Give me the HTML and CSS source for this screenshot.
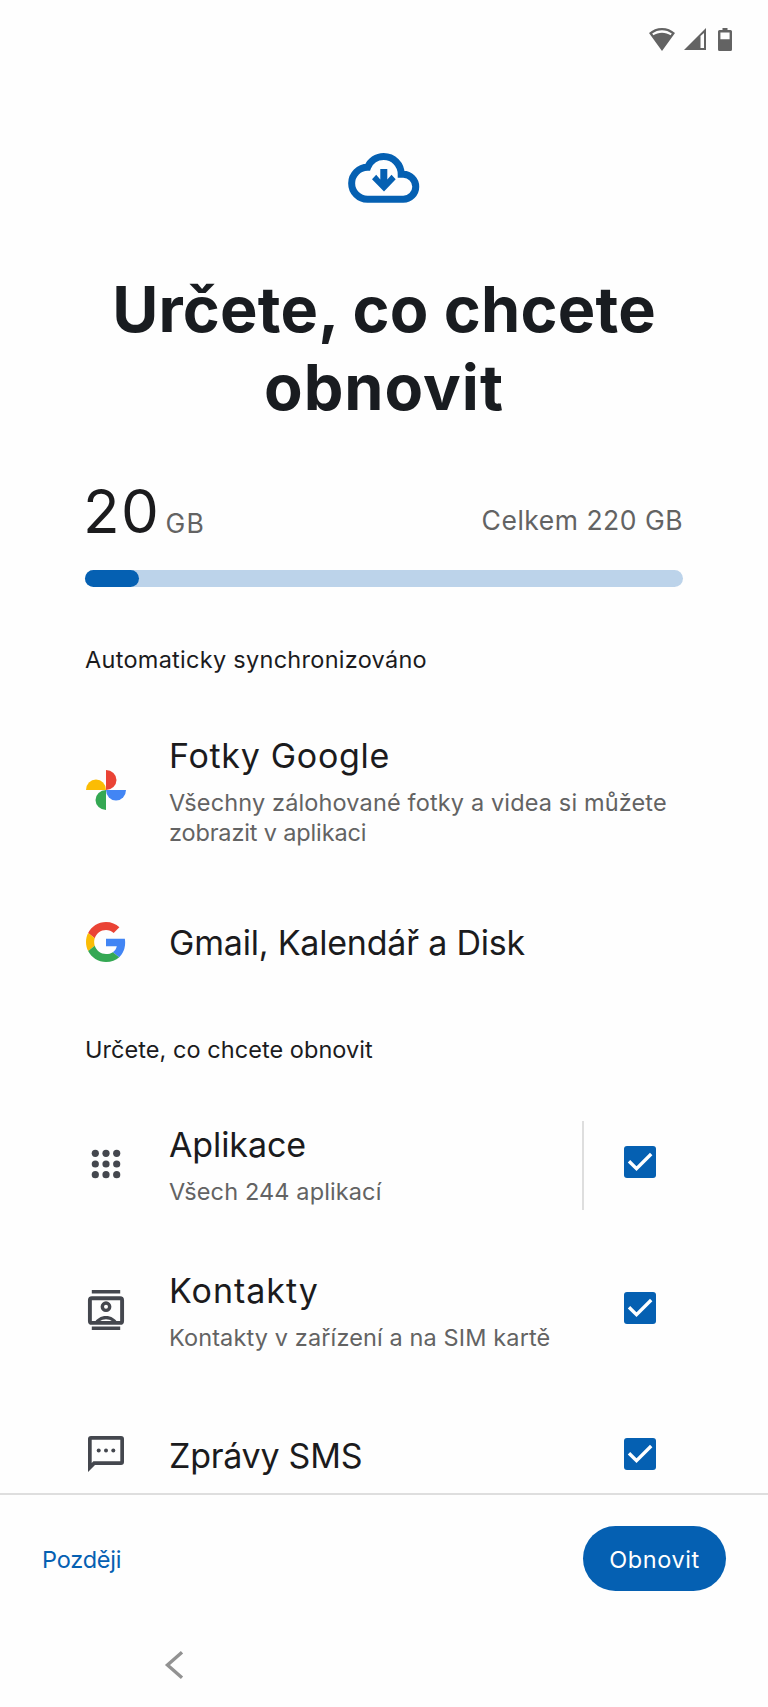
FILE: index.html
```html
<!DOCTYPE html>

<html lang="cs">

<head>

    <title>Určete, co chcete obnovit</title>

    <meta charset="UTF-8">
    <meta name="viewport" content="width=device-width, initial-scale=1.0">

    <link rel="stylesheet" href="styles.css">

</head>

<body>

    <!-- SCROLLING CONTENT -->
    <div class="main-content">

        <!-- STATUS BAR -->
        <div class="status-bar">
            <svg width="26" height="23" viewBox="0 0 26 23">
                <path fill="#636363" fill-rule="evenodd" d="M13 0C8 0 3.500 1.900 0 5L13 23L26 5C22.500 1.900 18 0 13 0ZM13 2.200C16.700 2.200 20 3.400 22.800 5.500L21.600 7.300C19.100 5.700 16.200 4.800 13 4.800C9.800 4.800 6.900 5.700 4.400 7.300L3.200 5.500C6 3.400 9.300 2.200 13 2.200Z"/>
            </svg>
            <svg width="22" height="22" viewBox="0 0 22 22">
                <path fill="#636363" fill-rule="evenodd" d="M0 22L22 0V22ZM16.500 8V20H20V5Z"/>
            </svg>
            <svg width="14" height="23" viewBox="0 0 14 23">
                <path fill="#636363" fill-rule="evenodd" d="M4.500 0H9.500V2H12.500Q14 2 14 3.500V21.500Q14 23 12.500 23H1.500Q0 23 0 21.500V3.500Q0 2 1.500 2H4.500ZM2.400 4.600V11.300H11.600V4.600Z"/>
            </svg>
        </div>

        <!-- HEADER -->
        <div class="header">
            <svg class="cloud" width="72" height="50" viewBox="0 0 72 50">
                <path fill="none" stroke="#0560b2" stroke-width="7" d="M19.500 46.200H55.300A12.450 12.450 0 0 0 55.300 21.300H53.200C53.200 11.500 45.500 3.500 35.700 3.500C28.500 3.500 22.300 7.900 19.700 14.300A15.900 15.900 0 0 0 19.500 46.200Z"/>
                <path fill="#0560b2" d="M32.300 16H39.300V26.500L43.500 21.800L47.700 26.300L36 38.600L24 26.300L28.200 21.800L32.300 26.500Z"/>
            </svg>
            <h1><span class="line-1">Určete, co chcete</span><br><span class="line-2">obnovit</span></h1>
        </div>

        <!-- STORAGE -->
        <div class="storage">
            <div class="used"><span class="number">20</span><span class="unit">GB</span></div>
            <div class="total">Celkem 220 GB</div>
        </div>
        <div class="bar">
            <div class="bar-fill" style="width: 9%"></div>
        </div>

        <!-- SYNCED -->
        <h2 class="label label-sync">Automaticky synchronizováno</h2>
        <div class="row row-photos">
            <div class="icon">
                <svg width="40" height="40" viewBox="0 0 40 40">
                    <path fill="#ea4335" d="M20 0A10.500 10 0 0 1 20 20Z"/>
                    <path fill="#fbbc04" d="M0 20A10 10.500 0 0 1 20 20Z"/>
                    <path fill="#34a853" d="M20 40A10.500 10 0 0 1 20 20Z"/>
                    <path fill="#4285f4" d="M40 20A10 10.500 0 0 1 20 20Z"/>
                </svg>
            </div>
            <div class="text">
                <h3>Fotky Google</h3>
                <p>Všechny zálohované fotky a videa si můžete<br><span class="second">zobrazit v aplikaci</span></p>
            </div>
        </div>
        <div class="row row-google">
            <div class="icon">
                <svg width="40" height="40" viewBox="0 0 48 48">
                    <path fill="#ea4335" d="M24 9.500c3.540 0 6.710 1.220 9.210 3.600l6.850-6.850C35.900 2.380 30.470 0 24 0 14.620 0 6.510 5.380 2.560 13.220l7.980 6.190C12.430 13.720 17.740 9.500 24 9.500z"/>
                    <path fill="#4285f4" d="M46.980 24.550c0-1.570-.15-3.090-.38-4.550H24v9.020h12.940c-.58 2.960-2.260 5.480-4.780 7.180l7.730 6c4.510-4.180 7.090-10.360 7.090-17.650z"/>
                    <path fill="#fbbc05" d="M10.530 28.590c-.48-1.450-.76-2.990-.76-4.590s.27-3.140.76-4.590l-7.980-6.190C.92 16.460 0 20.120 0 24c0 3.880.92 7.540 2.560 10.780l7.970-6.190z"/>
                    <path fill="#34a853" d="M24 48c6.480 0 11.930-2.130 15.890-5.810l-7.730-6c-2.150 1.450-4.920 2.300-8.160 2.300-6.260 0-11.570-4.220-13.470-9.910l-7.980 6.190C6.510 42.620 14.620 48 24 48z"/>
                </svg>
            </div>
            <div class="text">
                <h3>Gmail, Kalendář a Disk</h3>
            </div>
        </div>

        <!-- CHOOSE WHAT TO RESTORE -->
        <h2 class="label label-restore">Určete, co chcete obnovit</h2>
        <div class="row row-apps">
            <div class="icon">
                <svg width="40" height="40" viewBox="0 0 40 40" fill="#44474e">
                    <circle cx="9.300" cy="9.300" r="3.600"/><circle cx="20" cy="9.300" r="3.600"/><circle cx="30.700" cy="9.300" r="3.600"/>
                    <circle cx="9.300" cy="20" r="3.600"/><circle cx="20" cy="20" r="3.600"/><circle cx="30.700" cy="20" r="3.600"/>
                    <circle cx="9.300" cy="30.700" r="3.600"/><circle cx="20" cy="30.700" r="3.600"/><circle cx="30.700" cy="30.700" r="3.600"/>
                </svg>
            </div>
            <div class="text">
                <h3>Aplikace</h3>
                <p>Všech 244 aplikací</p>
            </div>
            <div class="divider"></div>
            <div class="checkbox">
                <svg width="32" height="32" viewBox="0 0 32 32"><path fill="none" stroke="#fff" stroke-width="3.400" d="M5 15.300L12.500 22.700L27.200 8"/></svg>
            </div>
        </div>
        <div class="row row-contacts">
            <div class="icon">
                <svg width="40" height="40" viewBox="0 0 40 40">
                    <path fill="#44474e" d="M5.800 0H34.200V3.500H5.800ZM5.800 36.500H34.200V40H5.800Z"/>
                    <rect x="3.900" y="8.300" width="32.200" height="24.600" rx="2" fill="none" stroke="#44474e" stroke-width="3.900"/>
                    <circle cx="20" cy="16.700" r="3.700" fill="none" stroke="#44474e" stroke-width="3.400"/>
                    <path fill="#44474e" fill-rule="evenodd" d="M8.300 33C10.500 28.700 15 26 20 26C25 26 29.500 28.700 31.700 33ZM13.500 31.500H26.500C24.500 30 22.500 29.300 20 29.300C17.500 29.300 15.500 30 13.500 31.500Z"/>
                </svg>
            </div>
            <div class="text">
                <h3>Kontakty</h3>
                <p>Kontakty v zařízení a na SIM kartě</p>
            </div>
            <div class="checkbox">
                <svg width="32" height="32" viewBox="0 0 32 32"><path fill="none" stroke="#fff" stroke-width="3.400" d="M5 15.300L12.500 22.700L27.200 8"/></svg>
            </div>
        </div>
        <div class="row row-sms">
            <div class="icon">
                <svg width="40" height="40" viewBox="0 0 40 40">
                    <path fill="#44474e" fill-rule="evenodd" d="M5 2H35Q38 2 38 5V28Q38 31 35 31H9L2 38V5Q2 2 5 2ZM5.700 5.700V29L7.400 27.300H34.300V5.700Z"/>
                    <circle cx="12.700" cy="16.600" r="2" fill="#44474e"/><circle cx="20" cy="16.600" r="2" fill="#44474e"/><circle cx="27.300" cy="16.600" r="2" fill="#44474e"/>
                </svg>
            </div>
            <div class="text">
                <h3>Zprávy SMS</h3>
            </div>
            <div class="checkbox">
                <svg width="32" height="32" viewBox="0 0 32 32"><path fill="none" stroke="#fff" stroke-width="3.400" d="M5 15.300L12.500 22.700L27.200 8"/></svg>
            </div>
        </div>
    </div>

    <!-- BOTTOM BUTTONS -->
    <div class="footer">
        <button class="later">Později</button>
        <button class="restore">Obnovit</button>
    </div>

    <!-- NAVIGATION BAR -->
    <div class="nav-bar">
        <svg width="20" height="30" viewBox="0 0 20 30">
            <path fill="none" stroke="#929292" stroke-width="3.400" d="M18 2.300L3.500 15L18 27.700"/>
        </svg>
    </div>

</body>

</html>
```
FILE: styles.css
```css
* {
    padding: 0;
    margin: 0;
    box-sizing: border-box;
}
body {
    background-color: #fefefe;
    font-family: Inter, "Open Sans", sans-serif;
    color: #1b1b1d;
    width: 100%;
}
svg {
    display: block;
}
.main-content {
    height: 1493px;
    padding: 0 85px;
    overflow: hidden;
}

/* Status bar */
.status-bar {
    display: flex;
    justify-content: flex-end;
    height: 153px;
    padding-top: 28px;
    margin-right: -49px;
}
.status-bar svg + svg {
    margin-left: 9px;
}
.status-bar svg:last-child {
    margin-left: 12px;
}

/* Header */
.cloud {
    margin: 0 auto;
}
h1 {
    margin-top: 67px;
    font-size: 63px;
    line-height: 78px;
    font-weight: 700;
    text-align: center;
    white-space: nowrap;
    color: #191c20;
}
.line-1 {
    letter-spacing: 0.2px;
}
.line-2 {
    letter-spacing: 1px;
}

/* Storage */
.storage {
    display: flex;
    justify-content: space-between;
    align-items: flex-end;
    height: 60px;
    margin-top: 55px;
}
.used {
    display: flex;
    align-items: baseline;
    height: 60px;
    line-height: 60px;
    margin-left: -2px;
}
.number {
    font-size: 60px;
    letter-spacing: 1.5px;
}
.unit {
    font-size: 26.5px;
    letter-spacing: 1.2px;
    margin-left: 5px;
    color: #636363;
}
.total {
    font-size: 26.5px;
    line-height: 30px;
    letter-spacing: 0.5px;
    margin-bottom: 6px;
    color: #636363;
}
.bar {
    height: 17px;
    margin-top: 29px;
    border-radius: 9px;
    background-color: #bcd3ea;
}
.bar-fill {
    height: 17px;
    border-radius: 9px;
    background-color: #0560b2;
}

/* List */
.label {
    font-size: 23.5px;
    line-height: 30px;
    font-weight: 400;
}
.label-sync {
    margin: 58px 0 39px;
    letter-spacing: 0.28px;
}
.label-restore {
    margin: 19px 0 27px;
    letter-spacing: 0.05px;
}
.row {
    display: flex;
    align-items: center;
    height: 146px;
    padding-right: 27px;
}
.row-photos {
    height: 155px;
    padding-right: 0;
}
.row-google {
    height: 147px;
}
.icon {
    width: 84px;
    padding: 0 0 3px 1px;
}
.row-google .icon {
    padding-bottom: 1px;
}
.text {
    flex: 1;
    white-space: nowrap;
}
h3 {
    font-size: 34px;
    line-height: 40px;
    font-weight: 400;
}
p {
    margin-top: 12px;
    font-size: 23.5px;
    line-height: 30px;
    letter-spacing: 0.12px;
    color: #636363;
}
.row-photos p {
    letter-spacing: 0.14px;
}
.row-photos .second {
    letter-spacing: -0.15px;
}
.row-photos h3 {
    letter-spacing: 0.7px;
}
.row-google h3 {
    letter-spacing: -0.2px;
}
.row-apps h3 {
    letter-spacing: -0.1px;
}
.row-contacts h3 {
    letter-spacing: 1px;
}
.row-sms h3 {
    letter-spacing: -0.25px;
}
.row-apps .text, .row-contacts .text {
    padding-top: 2px;
}
.row-sms .text {
    padding-bottom: 2px;
}
.row-sms .icon {
    padding-bottom: 7px;
}
.divider {
    width: 2px;
    height: 89px;
    margin-right: 40px;
    background-color: #dedede;
}
.checkbox {
    width: 32px;
    height: 32px;
    margin-bottom: 6px;
    border-radius: 3px;
    background-color: #0560b2;
}

/* Bottom buttons */
.footer {
    display: flex;
    justify-content: space-between;
    height: 136px;
    padding: 31px 42px 0;
    border-top: 2px solid #dedede;
}
button {
    height: 65px;
    padding-top: 2px;
    font-family: inherit;
    font-size: 23.5px;
    border: none;
    cursor: pointer;
}
.later {
    background: none;
    color: #0560b2;
    letter-spacing: -0.2px;
}
.restore {
    width: 143px;
    border-radius: 33px;
    background-color: #0560b2;
    color: white;
    letter-spacing: 0.6px;
}

.nav-bar {
    padding: 21px 0 0 164px;
}
```
